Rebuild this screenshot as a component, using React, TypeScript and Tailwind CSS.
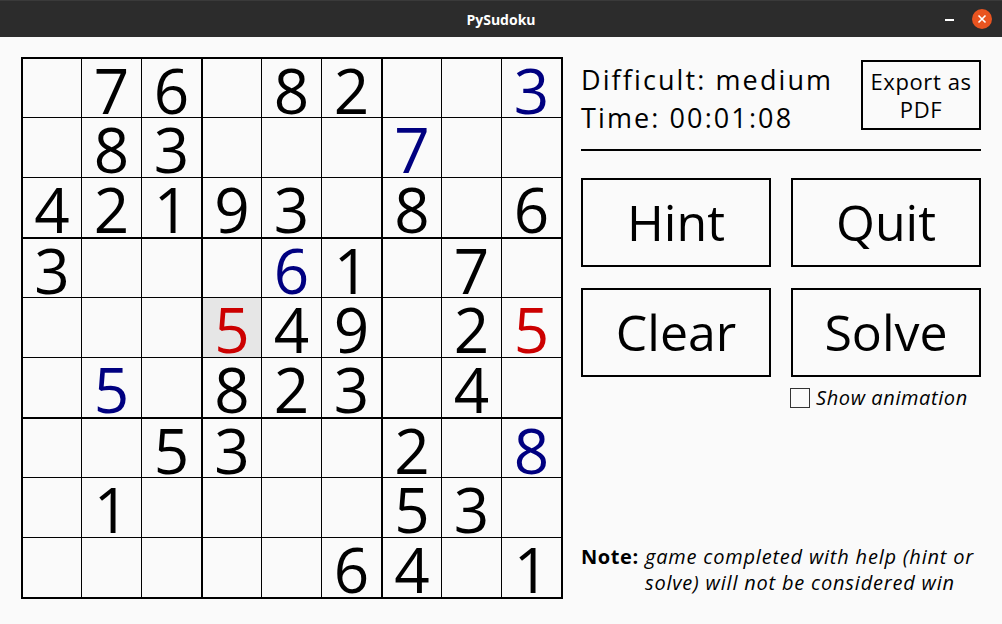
import React from 'react'

type Cell = { v: number; c?: 'blue' | 'red'; hl?: boolean } | null

const B = (v: number): Cell => ({ v, c: 'blue' })
const R = (v: number, hl = false): Cell => ({ v, c: 'red', hl })
const N = (v: number): Cell => ({ v })
const _ = null

const board: Cell[][] = [
  [_, N(7), N(6), _, N(8), N(2), _, _, B(3)],
  [_, N(8), N(3), _, _, _, B(7), _, _],
  [N(4), N(2), N(1), N(9), N(3), _, N(8), _, N(6)],
  [N(3), _, _, _, B(6), N(1), _, N(7), _],
  [_, _, _, R(5, true), N(4), N(9), _, N(2), R(5)],
  [_, B(5), _, N(8), N(2), N(3), _, N(4), _],
  [_, _, N(5), N(3), _, _, N(2), _, B(8)],
  [_, N(1), _, _, _, _, N(5), N(3), _],
  [_, _, _, _, _, N(6), N(4), _, N(1)]
]

const colorClass = {
  blue: 'text-[#000080]',
  red: 'text-[#cc0000]'
}

function SudokuGrid() {
  const boxes = [0, 1, 2, 3, 4, 5, 6, 7, 8]
  return (
    <div className="grid grid-cols-3 gap-[2px] bg-black p-[2px] w-fit">
      {boxes.map((b) => {
        const br = Math.floor(b / 3) * 3
        const bc = (b % 3) * 3
        return (
          <div
            key={b}
            className="grid grid-cols-[58px_59px_59px] grid-rows-[58px_59px_59px] gap-px bg-black"
          >
            {[0, 1, 2, 3, 4, 5, 6, 7, 8].map((i) => {
              const cell = board[br + Math.floor(i / 3)][bc + (i % 3)]
              return (
                <div
                  key={i}
                  className={`flex items-center justify-center text-[62px] leading-[54px] pt-[3px] ${
                    cell?.hl ? 'bg-[#e6e6e6]' : 'bg-[#fafafa]'
                  } ${cell?.c ? colorClass[cell.c] : 'text-black'}`}
                >
                  {cell ? cell.v : ''}
                </div>
              )
            })}
          </div>
        )
      })}
    </div>
  )
}

function BigButton({ label }: { label: string }) {
  return (
    <div className="w-[190px] h-[89px] border-2 border-black flex items-center justify-center text-[50px] text-black leading-none pb-[2px]">
      {label}
    </div>
  )
}

export default function App() {
  return (
    <div className="w-[1002px] h-[624px] flex flex-col bg-[#fafafa] font-['Open_Sans',sans-serif] overflow-hidden">
      <div className="h-[37px] bg-[#2c2c2c] border-t border-[#3a3a3a] flex items-center relative shrink-0">
        <div className="flex-1 text-center text-white text-[14px] font-bold">PySudoku</div>
        <div className="absolute right-[10px] top-[8px] flex items-center gap-[18px]">
          <div className="w-[9px] h-[2px] bg-white mt-[2px]" />
          <div className="w-[20px] h-[20px] rounded-full bg-[#e95420] flex items-center justify-center">
            <svg width="10" height="10" viewBox="0 0 10 10">
              <path d="M1.5 1.5 L8.5 8.5 M8.5 1.5 L1.5 8.5" stroke="white" strokeWidth="1.6" />
            </svg>
          </div>
        </div>
      </div>

      <div className="flex pl-[21px] pt-[20px]">
        <SudokuGrid />

        <div className="ml-[18px] w-[400px] h-[541px] flex flex-col">
          <div className="flex justify-between items-start pt-[2px]">
            <div className="text-[27px] leading-[38px] tracking-[2.1px] text-black pt-[2px]">
              <div>Difficult: medium</div>
              <div>Time: 00:01:08</div>
            </div>
            <div className="w-[120px] h-[70px] border-2 border-black flex items-center justify-center text-center text-[22px] leading-[28px] tracking-[0.6px] text-black mt-[1px]">
              Export as<br />PDF
            </div>
          </div>

          <div className="h-[2px] bg-black mt-[12px]" />

          <div className="grid grid-cols-2 gap-x-[20px] gap-y-[21px] mt-[27px]">
            <BigButton label="Hint" />
            <BigButton label="Quit" />
            <BigButton label="Clear" />
            <BigButton label="Solve" />
          </div>

          <div className="flex items-center gap-[6px] ml-[209px] mt-[11px]">
            <div className="w-[20px] h-[20px] border border-[#333] bg-[#fafafa]" />
            <span className="italic text-[20px] tracking-[0.6px] text-black leading-none">Show animation</span>
          </div>

          <div className="mt-auto mb-[2px] flex text-[20px] leading-[26px] text-black">
            <span className="font-bold tracking-[0.6px] w-[64px] shrink-0">Note:</span>
            <span className="italic tracking-[0.8px]">
              game completed with help (hint or
              <br />
              solve) will not be considered win
            </span>
          </div>
        </div>
      </div>
    </div>
  )
}
